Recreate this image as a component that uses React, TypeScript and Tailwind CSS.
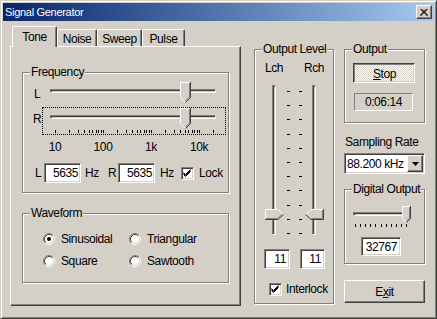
import React from "react";

const sunken =
  "border border-t-[#808080] border-l-[#808080] border-r-white border-b-white shadow-[inset_1px_1px_0_#404040,inset_-1px_-1px_0_#d4d0c8]";
const raised =
  "border border-t-white border-l-white border-r-[#404040] border-b-[#404040] shadow-[inset_-1px_-1px_0_#808080,inset_1px_1px_0_#d4d0c8]";

function Group({ label, className, children }: { label: string; className: string; children?: React.ReactNode }) {
  return (
    <div className={`relative border border-[#808080] shadow-[inset_1px_1px_0_#fff,1px_1px_0_#fff] ${className}`}>
      <span className="absolute -top-[8px] left-[7px] bg-[#d4d0c8] px-[1px] leading-[14px] whitespace-nowrap">{label}</span>
      {children}
    </div>
  );
}

function Check() {
  return (
    <div className={`w-[13px] h-[13px] bg-white ${sunken} flex items-center justify-center shrink-0`}>
      <svg width="11" height="11" viewBox="0 0 11 11">
        <polyline points="1.5,4.5 3.5,6.5 8.5,1.5" stroke="#000" strokeWidth="1" fill="none" />
        <polyline points="1.5,5.5 3.5,7.5 8.5,2.5" stroke="#000" strokeWidth="1" fill="none" />
        <polyline points="1.5,6.5 3.5,8.5 8.5,3.5" stroke="#000" strokeWidth="1" fill="none" />
      </svg>
    </div>
  );
}

function Radio({ on }: { on?: boolean }) {
  return (
    <svg width="12" height="12" viewBox="0 0 12 12" className="shrink-0">
      <circle cx="6" cy="6" r="4.5" fill="#fff" />
      <path d="M2.11 9.89 A5.5 5.5 0 0 1 9.89 2.11" stroke="#808080" fill="none" />
      <path d="M9.89 2.11 A5.5 5.5 0 0 1 2.11 9.89" stroke="#fff" fill="none" />
      <path d="M2.82 9.18 A4.5 4.5 0 0 1 9.18 2.82" stroke="#404040" fill="none" />
      <path d="M9.18 2.82 A4.5 4.5 0 0 1 2.82 9.18" stroke="#d4d0c8" fill="none" />
      {on && <circle cx="6" cy="6" r="2" fill="#000" />}
    </svg>
  );
}

function ThumbDown() {
  return (
    <svg width="11" height="21" viewBox="0 0 11 21">
      <polygon points="0,0 11,0 11,15.5 5.5,21 0,15.5" fill="#d4d0c8" />
      <polyline points="0.5,15.5 0.5,0.5 10,0.5" stroke="#fff" fill="none" />
      <line x1="0.5" y1="15.5" x2="5" y2="20" stroke="#fff" />
      <polyline points="10.5,0 10.5,15.5 5.5,20.5" stroke="#404040" fill="none" />
      <polyline points="9.5,1 9.5,15 5.5,19" stroke="#808080" fill="none" />
    </svg>
  );
}

function ThumbDownSmall() {
  return (
    <svg width="9" height="17" viewBox="0 0 9 17">
      <polygon points="0,0 9,0 9,12.5 4.5,17 0,12.5" fill="#d4d0c8" />
      <polyline points="0.5,12.5 0.5,0.5 8,0.5" stroke="#fff" fill="none" />
      <line x1="0.5" y1="12.5" x2="4" y2="16" stroke="#fff" />
      <polyline points="8.5,0 8.5,12.5 4.5,16.5" stroke="#404040" fill="none" />
      <polyline points="7.5,1 7.5,12 4.5,15" stroke="#808080" fill="none" />
    </svg>
  );
}

function ThumbRight() {
  return (
    <svg width="19" height="11" viewBox="0 0 19 11">
      <polygon points="0,0 13,0 18.5,5.5 13,11 0,11" fill="#d4d0c8" />
      <polyline points="0.5,10.5 0.5,0.5 13,0.5 17.5,5" stroke="#fff" fill="none" />
      <polyline points="0,10.5 13,10.5 18.5,5.5" stroke="#404040" fill="none" />
      <polyline points="1,9.5 12.5,9.5 17,5.5" stroke="#808080" fill="none" />
    </svg>
  );
}

function ThumbLeft() {
  return (
    <svg width="19" height="11" viewBox="0 0 19 11">
      <polygon points="19,0 6,0 0.5,5.5 6,11 19,11" fill="#d4d0c8" />
      <polyline points="1,5.5 6,0.5 18.5,0.5" stroke="#fff" fill="none" />
      <polyline points="0.5,5.5 6,10.5 18.5,10.5 18.5,0" stroke="#404040" fill="none" />
      <polyline points="6.5,9.5 17.5,9.5 17.5,1" stroke="#808080" fill="none" />
    </svg>
  );
}

function FreqTicks() {
  const xs: number[] = [];
  for (let d = 0; d < 4; d++) {
    for (let m = 1; m <= 9; m++) {
      const v = Math.pow(10, d) * m;
      if (v > 2000) break;
      xs.push(5 + 48 * Math.log10(v));
    }
  }
  return (
    <svg width="166" height="3" viewBox="0 0 166 3" className="block">
      {xs.map((x, i) => (
        <rect key={i} x={Math.round(x)} y="0" width="1" height="3" fill="#000" />
      ))}
    </svg>
  );
}

function Trackbar({ focus, ticks }: { focus?: boolean; ticks?: boolean }) {
  return (
    <div
      className={`relative w-[184px] ${focus ? "h-[28px] outline-1 outline-dotted outline-black outline-offset-[-1px]" : "h-[26px]"}`}
    >
      <div className={`ml-[8px] mt-[8px] w-[166px] h-[4px] ${sunken}`} />
      {ticks && (
        <div className="ml-[8px] mt-[11px]">
          <FreqTicks />
        </div>
      )}
      <div className="absolute left-[138px] top-[1px]">
        <ThumbDown />
      </div>
    </div>
  );
}

export default function App() {
  const levelTicks = Array.from({ length: 11 }, (_, i) => Math.round(6 + i * 14.2));
  const digTicks = Array.from({ length: 11 }, (_, i) => Math.round(2 + i * 5.1));
  return (
    <div className="w-[437px] h-[319px] bg-[#d4d0c8] border border-t-[#d4d0c8] border-l-[#d4d0c8] border-r-[#404040] border-b-[#404040] shadow-[inset_1px_1px_0_#fff,inset_-1px_-1px_0_#808080] p-[2px] font-['Liberation_Sans',Arial,sans-serif] text-[12px] leading-[14px] tracking-[-0.4px] text-black overflow-hidden">
      {/* Title bar */}
      <div className="flex items-center justify-between h-[18px] bg-linear-to-r from-[#0a246a] to-[#a6caf0] pl-[2px] pr-[2px]">
        <span className="text-white text-[11px] leading-[14px] tracking-[-0.3px]">Signal Generator</span>
        <div className={`w-[16px] h-[14px] bg-[#d4d0c8] ${raised} flex items-center justify-center`}>
          <svg width="8" height="7" viewBox="0 0 8 7">
            <path d="M0.5 0 L7.5 7 M1.5 0 L8 6.5 M7.5 0 L0.5 7 M6.5 0 L0 6.5" stroke="#000" strokeWidth="1" />
          </svg>
        </div>
      </div>

      {/* Body */}
      <div className="flex items-start pl-[7px] pt-[5px]">
        {/* Tab control */}
        <div className="w-[231px] flex flex-col">
          <div className="flex items-start h-[20px]">
            <div className="relative z-10 ml-[2px] w-[45px] h-[21px] bg-[#d4d0c8] border-l border-t border-r border-l-white border-t-white border-r-[#404040] rounded-t-[2px] shadow-[inset_-1px_0_0_#808080] flex items-center justify-center">
              Tone
            </div>
            <div className="mt-[3px] w-[40px] h-[17px] border-l border-t border-r border-l-white border-t-white border-r-[#404040] rounded-t-[2px] shadow-[inset_-1px_0_0_#808080] flex items-center justify-center pt-[1px]">
              Noise
            </div>
            <div className="mt-[3px] w-[45px] h-[17px] border-l border-t border-r border-l-white border-t-white border-r-[#404040] rounded-t-[2px] shadow-[inset_-1px_0_0_#808080] flex items-center justify-center pt-[1px]">
              Sweep
            </div>
            <div className="mt-[3px] w-[43px] h-[17px] border-l border-t border-r border-l-white border-t-white border-r-[#404040] rounded-t-[2px] shadow-[inset_-1px_0_0_#808080] flex items-center justify-center pt-[1px]">
              Pulse
            </div>
          </div>
          <div className="w-[231px] h-[260px] border border-t-white border-l-white border-r-[#404040] border-b-[#404040] shadow-[inset_-1px_-1px_0_#808080] pl-[11px] pt-[25px]">
            <Group label="Frequency" className="w-[207px] h-[121px]">
              <div className="flex items-start mt-[8px] pl-[11px]">
                <span className="w-[8px] mt-[6px]">L</span>
                <Trackbar />
              </div>
              <div className="flex items-start pl-[10px]">
                <span className="w-[9px] mt-[5px]">R</span>
                <Trackbar focus ticks />
              </div>
              <div className="flex mt-[5px] pl-[8px]">
                <span className="w-[48px] text-center">10</span>
                <span className="w-[48px] text-center">100</span>
                <span className="w-[48px] text-center">1k</span>
                <span className="w-[48px] text-center">10k</span>
              </div>
              <div className="flex items-center h-[20px] mt-[9px] pl-[12px]">
                <span className="w-[9px]">L</span>
                <div className={`w-[37px] h-[20px] bg-white ${sunken} flex items-center justify-end pr-[2px]`}>5635</div>
                <span className="ml-[4px] w-[14px]">Hz</span>
                <span className="ml-[9px] w-[10px]">R</span>
                <div className={`w-[37px] h-[20px] bg-white ${sunken} flex items-center justify-end pr-[2px]`}>5635</div>
                <span className="ml-[5px] w-[14px]">Hz</span>
                <div className="ml-[7px]">
                  <Check />
                </div>
                <span className="ml-[5px]">Lock</span>
              </div>
            </Group>

            <Group label="Waveform" className="mt-[20px] w-[207px] h-[70px]">
              <div className="mt-[17px] pl-[20px] grid grid-cols-[86px_86px] gap-y-[6px]">
                <div className="flex items-center h-[16px]">
                  <Radio on />
                  <span className="ml-[6px]">Sinusoidal</span>
                </div>
                <div className="flex items-center h-[16px]">
                  <Radio />
                  <span className="ml-[6px]">Triangular</span>
                </div>
                <div className="flex items-center h-[16px]">
                  <Radio />
                  <span className="ml-[6px]">Square</span>
                </div>
                <div className="flex items-center h-[16px]">
                  <Radio />
                  <span className="ml-[6px]">Sawtooth</span>
                </div>
              </div>
            </Group>
          </div>
        </div>

        {/* Output Level */}
        <Group label="Output Level" className="ml-[13px] mt-[23px] w-[80px] h-[255px]">
          <div className="mt-[11px] ml-[6px] grid grid-cols-[26px_26px] gap-x-[14px]">
            <span className="text-center">Lch</span>
            <span className="text-center">Rch</span>
          </div>
          <div className="relative mt-[10px] h-[150px] flex">
            <div className={`ml-[17px] w-[4px] h-[150px] ${sunken}`} />
            <svg width="36" height="150" viewBox="0 0 36 150" className="block">
              {levelTicks.map((y, i) => (
                <g key={i}>
                  <rect x="11" y={y} width="3" height="1" fill="#000" />
                  <rect x="23" y={y} width="3" height="1" fill="#000" />
                </g>
              ))}
            </svg>
            <div className={`w-[4px] h-[150px] ${sunken}`} />
            <div className="absolute left-[10px] top-[124px]">
              <ThumbRight />
            </div>
            <div className="absolute left-[50px] top-[124px]">
              <ThumbLeft />
            </div>
          </div>
          <div className="flex mt-[14px] ml-[9px] gap-[10px]">
            <div className={`w-[26px] h-[20px] bg-white ${sunken} flex items-center justify-end pr-[3px]`}>11</div>
            <div className={`w-[25px] h-[20px] bg-white ${sunken} flex items-center justify-end pr-[3px]`}>11</div>
          </div>
          <div className="flex items-center h-[14px] mt-[13px] ml-[14px]">
            <Check />
            <span className="ml-[4px]">Interlock</span>
          </div>
        </Group>

        {/* Right column */}
        <div className="ml-[10px] mt-[23px] w-[81px] flex flex-col">
          <Group label="Output" className="w-[81px] h-[74px]">
            <div className="ml-[8px] mt-[13px] w-[62px] h-[20px] border border-t-[#404040] border-l-[#404040] border-r-white border-b-white shadow-[inset_1px_1px_0_#808080,inset_-1px_-1px_0_#d4d0c8] bg-[image:repeating-conic-gradient(#ffffff_0%_25%,#d4d0c8_0%_50%)] bg-[length:2px_2px] flex items-center justify-center pt-[1px] pl-[1px]">
              <span>
                <span className="underline">S</span>top
              </span>
            </div>
            <div className="ml-[9px] mt-[10px] w-[59px] h-[18px] border border-t-[#808080] border-l-[#808080] border-r-white border-b-white flex items-center justify-center">
              0:06:14
            </div>
          </Group>
          <span className="mt-[12px] ml-[1px] whitespace-nowrap">Sampling Rate</span>
          <div className={`mt-[4px] w-[81px] h-[21px] bg-white ${sunken} flex items-center pl-[2px] pr-[1px]`}>
            <span className="flex-1 whitespace-nowrap overflow-hidden">88.200 kHz</span>
            <div className={`w-[16px] h-[17px] shrink-0 bg-[#d4d0c8] ${raised} flex items-center justify-center`}>
              <svg width="7" height="4" viewBox="0 0 7 4">
                <polygon points="0,0 7,0 3.5,4" fill="#000" />
              </svg>
            </div>
          </div>
          <Group label="Digital Output" className="mt-[15px] w-[81px] h-[75px]">
            <div className="relative ml-[8px] mt-[22px] w-[58px]">
              <div className={`w-[55px] h-[4px] ${sunken}`} />
              <svg width="55" height="3" viewBox="0 0 55 3" className="block mt-[8px]">
                {digTicks.map((x, i) => (
                  <rect key={i} x={x} y="0" width="1" height="3" fill="#000" />
                ))}
              </svg>
              <div className="absolute left-[49px] -top-[6px]">
                <ThumbDownSmall />
              </div>
            </div>
            <div className={`ml-[16px] mt-[10px] w-[40px] h-[19px] bg-white ${sunken} flex items-center justify-end pr-[3px]`}>
              32767
            </div>
          </Group>
          <div className={`mt-[16px] w-[81px] h-[23px] ${raised} flex items-center justify-center`}>
            <span>
              E<span className="underline">x</span>it
            </span>
          </div>
        </div>
      </div>
    </div>
  );
}
